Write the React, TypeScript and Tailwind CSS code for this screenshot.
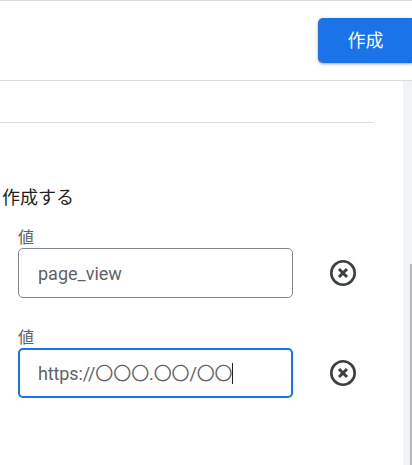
import React from "react";

function ClearIcon() {
  return (
    <svg width="28" height="28" viewBox="0 0 28 28" fill="none" className="block">
      <circle cx="14" cy="14" r="11.7" stroke="#3c4043" strokeWidth="2.6" />
      <path d="M10 10 L18 18 M18 10 L10 18" stroke="#3c4043" strokeWidth="3" />
    </svg>
  );
}

function Field({ value, focused }: { value: string; focused?: boolean }) {
  return (
    <div className="flex items-start">
      <div className="w-[275px] ml-[18px]">
        <div className="h-[20px] text-[16px] leading-[20px] text-[#5f6368]">値</div>
        <div
          className={
            focused
              ? "h-[50px] w-[275px] rounded-[5px] border-2 border-[#1a73e8] pl-[18px] flex items-center text-[18px] tracking-[-0.12px] text-[#5f6368]"
              : "h-[50px] w-[275px] rounded-[5px] border border-[#80868b] pl-[19px] flex items-center text-[18px] text-[#5f6368]"
          }
        >
          <span className="whitespace-nowrap">{value}</span>
          {focused && <span className="w-px h-[21px] bg-[#202124]" />}
        </div>
      </div>
      <div className="ml-[36px] mt-[31px]">
        <ClearIcon />
      </div>
    </div>
  );
}

export default function App() {
  return (
    <div
      className="w-[412px] h-[465px] overflow-hidden bg-white flex flex-col"
      style={{ fontFamily: "Roboto, 'Noto Sans CJK JP', sans-serif" }}
    >
      <header className="h-[81px] shrink-0 border-t border-b border-t-[#dadce0] border-b-[#dadce0] flex items-start justify-end pt-[17px]">
        <button className="w-[94px] h-[45px] rounded-l-[5px] bg-[#1a73e8] text-white text-[18px] pl-[1px] shadow-[0_1px_3px_rgba(60,64,67,0.5)]">
          作成
        </button>
      </header>
      <div className="flex flex-1 min-h-0">
        <main className="w-[403px] shrink-0">
          <div className="h-[42px] w-[373px] border-b border-[#dadce0]" />
          <div className="mt-[64px] h-[22px] text-[18px] leading-[22px] text-[#202124] pl-[2px] whitespace-nowrap">
            作成する
          </div>
          <div className="mt-[19px] flex flex-col gap-[30px]">
            <Field value="page_view" />
            <Field value="https://〇〇〇.〇〇/〇〇" focused />
          </div>
        </main>
        <aside className="flex-1 bg-[#f1f3f4] flex justify-end pt-[183px]">
          <div className="w-[2px] h-full bg-[#b4b6b8]" />
        </aside>
      </div>
    </div>
  );
}
